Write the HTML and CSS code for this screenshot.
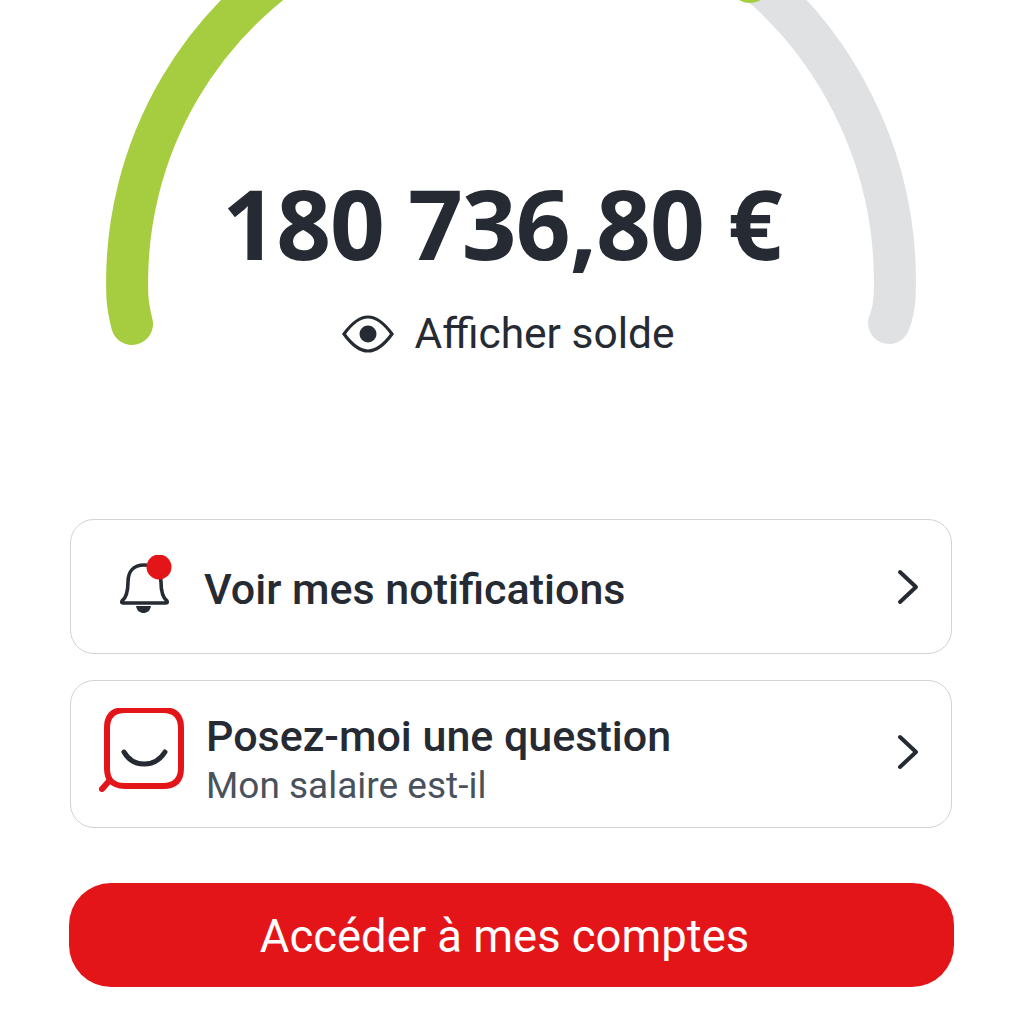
FILE: index.html
```html
<!DOCTYPE html>
<html lang="fr">
<head>
<meta charset="utf-8">
<title>Solde</title>
<link rel="stylesheet" href="styles.css">
</head>
<body>
<main class="page">
  <section class="gauge">
    <svg class="gauge-arc" width="1024" height="360" viewBox="0 0 1024 360" aria-hidden="true">
      <path class="arc-track" d="M889 323 C892 316 894 306 894.600 297 A382 390 0 0 0 720 -46"/>
      <path class="arc-fill" d="M132 324 C130 316 128 306 127.400 297 A384 383 0 0 1 750 -18"/>
    </svg>
    <div class="amount">180 736,80 €</div>
    <div class="toggle">
      <svg class="eye" width="52" height="40" viewBox="0 0 52 40" aria-hidden="true">
        <path d="M2 20 C10 9 18 3 26 3 C34 3 42 9 50 20 C42 31 34 37 26 37 C18 37 10 31 2 20 Z" fill="none" stroke="#262b33" stroke-width="3.200"/>
        <circle cx="26" cy="20" r="8.500" fill="#262b33"/>
      </svg>
      <span>Afficher solde</span>
    </div>
  </section>

  <section class="actions">
    <a class="card card-notif">
      <svg class="icon-bell" width="56" height="64" viewBox="0 0 56 64" aria-hidden="true">
        <path d="M4 46 C9 42 10 36 10 27 C10 16 16 10 26 10 C36 10 42 16 43 27 C43 36 44 42 49 46 Q50 48 48 48 L5 48 Q3 48 4 46 Z" fill="none" stroke="#262b33" stroke-width="3.600" stroke-linejoin="round"/>
        <path d="M18 51 H33 C32 56 29 58 25.500 58 C22 58 19 56 18 51 Z" fill="#262b33"/>
        <circle cx="41" cy="12" r="12.500" fill="#e41519"/>
      </svg>
      <span class="card-title">Voir mes notifications</span>
      <svg class="chev" width="24" height="38" viewBox="0 0 24 38" aria-hidden="true"><path d="M4 4 L20 19 L4 34" fill="none" stroke="#262b33" stroke-width="4" stroke-linecap="round" stroke-linejoin="round"/></svg>
    </a>
    <a class="card card-chat">
      <svg class="icon-chat" width="88" height="84" viewBox="0 0 88 84" aria-hidden="true">
        <path d="M3 81 L11 72 C9 69 8 66 8 60 V20 C8 8 14 2 26 2 H64 C76 2 82 8 82 20 V60 C82 72 76 78 64 78 H26 C20 78 15 77 11 72" fill="none" stroke="#e41519" stroke-width="6" stroke-linecap="round" stroke-linejoin="round"/>
        <path d="M25 44 C34 60 56 60 66 44" fill="none" stroke="#262b33" stroke-width="5" stroke-linecap="round"/>
      </svg>
      <span class="card-text">
        <span class="card-title">Posez-moi une question</span>
        <span class="card-sub">Mon salaire est-il</span>
      </span>
      <svg class="chev" width="24" height="38" viewBox="0 0 24 38" aria-hidden="true"><path d="M4 4 L20 19 L4 34" fill="none" stroke="#262b33" stroke-width="4" stroke-linecap="round" stroke-linejoin="round"/></svg>
    </a>
  </section>

  <button class="cta">Accéder à mes comptes</button>
</main>
</body>
</html>
```

FILE: styles.css
```css
* { box-sizing: border-box; }
html, body { margin: 0; padding: 0; background: #fff; }
body { width: 1024px; height: 1024px; overflow: hidden; font-family: Roboto, "Noto Sans", sans-serif; color: #262b33; }
.page { display: flex; flex-direction: column; height: 1024px; padding: 0 70px; }
.gauge { position: relative; height: 519px; display: flex; flex-direction: column; align-items: center; padding-top: 163px; }
.gauge-arc { position: absolute; left: -70px; top: 0; overflow: hidden; }
.arc-track, .arc-fill { fill: none; stroke-width: 42; stroke-linecap: round; }
.arc-track { stroke: #dfe1e3; }
.arc-fill { stroke: #a6cd3f; }
.amount { position: relative; font-family: "Noto Sans", sans-serif; font-size: 96px; font-weight: 700; line-height: 120px; letter-spacing: -1px; margin-right: 20px; white-space: nowrap; }
.toggle { position: relative; display: flex; align-items: center; gap: 20px; margin-top: 24px; font-size: 42.5px; line-height: 54px; margin-right: 7px; }
.eye { display: block; }
.actions { display: flex; flex-direction: column; gap: 26px; }
.card { display: flex; align-items: center; border: 1.5px solid #d2d3d4; border-radius: 24px; background: #fff; width: 882px; }
.card-notif { height: 135px; padding: 0 31px 0 47px; gap: 30px; }
.card-notif .card-title { padding-top: 4px; }
.card-chat { height: 148px; padding: 0 31px 0 28px; gap: 19px; }
.card-chat .icon-chat { margin-bottom: 8px; }
.card-chat .chev { margin-bottom: 5px; }
.card-text { display: flex; flex-direction: column; flex: 1; padding-top: 12px; }
.card-title { font-size: 43px; line-height: 52px; font-weight: 500; flex: 1; }
.card-sub { font-size: 37px; line-height: 48px; color: #49525c; }
.cta { margin-top: 55px; width: 885px; height: 104px; margin-left: -1px; padding: 4px 14px 0 0; border: 0; border-radius: 42px; background: #e41519; color: #fff; font: 400 45.4px/1 Roboto, "Noto Sans", sans-serif; }
```
